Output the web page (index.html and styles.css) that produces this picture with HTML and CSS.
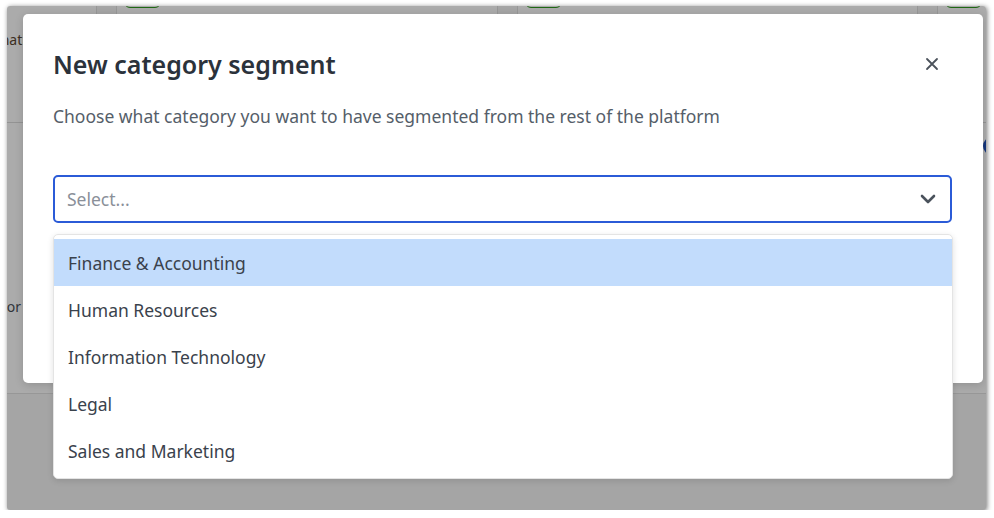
FILE: index.html
```html
<!DOCTYPE html>
<html lang="en">
<head>
    <meta charset="UTF-8">
    <meta name="viewport" content="width=device-width, initial-scale=1.0">
    <title>New category segment</title>
    <link rel="stylesheet" href="styles.css">
</head>
<body>
    <div class="screen">
        <!-- page behind the modal -->
        <div class="page">
            <div class="card">
                <div class="card-top"><span class="card-label">Designation</span></div>
                <div class="card-body"><span class="card-foot">Vendor</span></div>
            </div>
            <div class="card">
                <div class="card-top"><span class="pill"></span></div>
                <div class="card-body"></div>
            </div>
            <div class="card">
                <div class="card-top"><span class="pill"></span></div>
                <div class="card-body"></div>
            </div>
            <div class="card">
                <div class="card-top"><span class="pill"></span></div>
                <div class="card-body"><span class="dot"></span></div>
            </div>
        </div>

        <div class="overlay">
            <div class="modal">
                <div class="modal-header">
                    <h2 class="modal-title">New category segment</h2>
                    <button class="close-btn" aria-label="Close">
                        <svg width="14" height="14" viewBox="0 0 14 14">
                            <path d="M2 2 L12 12 M12 2 L2 12" stroke="#4b525b" stroke-width="1.8" stroke-linecap="round"/>
                        </svg>
                    </button>
                </div>
                <p class="modal-desc">Choose what category you want to have segmented from the rest of the platform</p>

                <div class="select-wrap">
                    <div class="select">
                        <span class="placeholder">Select...</span>
                        <svg class="chevron" width="16" height="10" viewBox="0 0 16 10">
                            <path d="M2 2 L8 8 L14 2" fill="none" stroke="#4a525c" stroke-width="2.6" stroke-linecap="round" stroke-linejoin="round"/>
                        </svg>
                    </div>
                    <ul class="menu">
                        <li class="option active">Finance &amp; Accounting</li>
                        <li class="option">Human Resources</li>
                        <li class="option">Information Technology</li>
                        <li class="option">Legal</li>
                        <li class="option">Sales and Marketing</li>
                    </ul>
                </div>
            </div>
        </div>
    </div>
</body>
</html>
```

FILE: styles.css
```css
body {
    margin: 0;
    background: #ffffff;
    font-family: "Noto Sans", "Open Sans", sans-serif;
}
.screen {
    position: relative;
    width: 979px;
    height: 504px;
    margin: 6px 0 0 7px;
    background: #f6f6f6;
    border-radius: 3px;
    overflow: hidden;
    box-shadow: 1px 1px 5px rgba(0,0,0,0.55);
}

/* background page */
.page {
    display: grid;
    grid-template-columns: 384px 382px 401px 300px;
    column-gap: 19px;
    margin-left: -294px;
    margin-top: -20px;
}
.card {
    height: 406px;
    background: #ffffff;
    border: 1px solid #e2e2e2;
    border-radius: 4px;
    display: flex;
    flex-direction: column;
}
.card-top {
    height: 135px;
    border-bottom: 1px solid #dcdcdc;
    position: relative;
}
.card-body {
    flex: 1;
    position: relative;
}
.card-label {
    position: absolute;
    right: 53px;
    top: 43px;
    font-size: 14px;
    color: #5a4632;
}
.card-foot {
    position: absolute;
    right: 75px;
    top: 174px;
    font-size: 14px;
    color: #4a5058;
}
.pill {
    position: absolute;
    left: 7px;
    top: -3px;
    width: 35px;
    height: 22px;
    border-radius: 6px;
    border: 1.5px solid #2f9c1e;
    background: #ffffff;
}
.dot {
    position: absolute;
    left: 45px;
    top: 14px;
    width: 18px;
    height: 18px;
    border-radius: 50%;
    background: #1f4fb8;
}

/* modal */
.overlay {
    position: absolute;
    inset: 0;
    background: rgba(0,0,0,0.33);
}
.modal {
    width: 960px;
    height: 369px;
    margin: 8px 0 0 16px;
    padding: 0 31px 0 30px;
    box-sizing: border-box;
    background: #ffffff;
    border-radius: 5px;
    box-shadow: 0 2px 8px rgba(0,0,0,0.15);
}
.modal-header {
    display: flex;
    align-items: center;
    justify-content: space-between;
    padding-top: 34px;
}
.modal-title {
    margin: 0;
    font-size: 25px;
    line-height: 32px;
    font-weight: 600;
    color: #2b323b;
}
.close-btn {
    width: 24px;
    height: 24px;
    margin-right: 8px;
    padding: 0;
    border: none;
    background: none;
    display: flex;
    align-items: center;
    justify-content: center;
}
.modal-desc {
    margin: 24px 0 0;
    font-size: 17.5px;
    line-height: 24px;
    color: #555e69;
}
.select-wrap {
    position: relative;
    margin-top: 47px;
}
.select {
    height: 48px;
    box-sizing: border-box;
    border: 2px solid #2b5bd7;
    border-radius: 5px;
    padding: 0 14px 0 12px;
    display: flex;
    align-items: center;
    justify-content: space-between;
}
.placeholder {
    font-size: 17.5px;
    color: #8a9099;
}
.menu {
    position: absolute;
    top: calc(100% + 11px);
    left: 0;
    right: -1px;
    margin: 0;
    padding: 4px 0;
    list-style: none;
    background: #ffffff;
    border: 1px solid #e4e4e4;
    border-radius: 5px;
    box-shadow: 0 2px 6px rgba(0,0,0,0.12);
}
.option {
    height: 47px;
    padding: 0 14px;
    display: flex;
    align-items: center;
    font-size: 17.5px;
    color: #3a424c;
}
.option.active {
    background: #c2dcfc;
}
```
